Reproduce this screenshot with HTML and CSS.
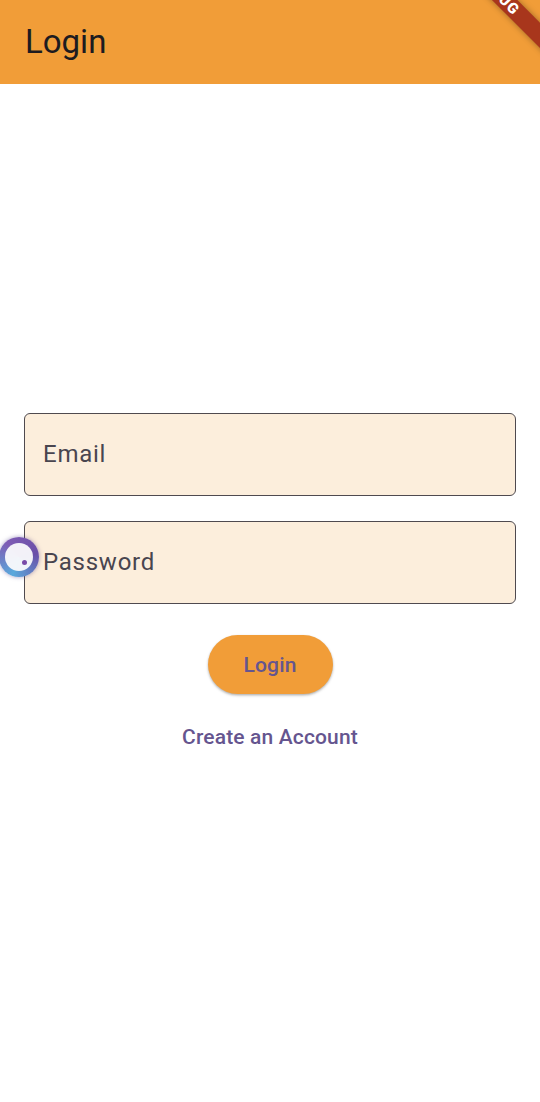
FILE: index.html
```html
<!DOCTYPE html>
<html>
<head>
<meta charset="utf-8">
<link rel="stylesheet" href="styles.css">
</head>
<body>
<div class="app">
  <header class="appbar">
    <h1 class="title">Login</h1>
  </header>
  <main class="content">
    <div class="field"><span class="label">Email</span></div>
    <div class="field"><span class="label">Password</span></div>
    <div class="actions">
      <button class="btn-login">Login</button>
      <button class="btn-text">Create an Account</button>
    </div>
  </main>
  <div class="banner"><span>DEBUG</span></div>
  <div class="touch"><span class="dot"></span></div>
</div>
</body>
</html>
```
FILE: styles.css
```css
* { box-sizing: border-box; }
html, body { margin: 0; padding: 0; }
body {
  font-family: Roboto, "Noto Sans", sans-serif;
  background: #ffffff;
  width: 540px;
  height: 1102px;
  overflow: hidden;
}
.app {
  position: relative;
  width: 540px;
  height: 1102px;
  overflow: hidden;
  display: flex;
  flex-direction: column;
}
.appbar {
  height: 84px;
  background: #f19d38;
  display: flex;
  align-items: center;
  padding: 0 25px 2px;
  flex-shrink: 0;
}
.title {
  margin: 0;
  font-size: 33px;
  font-weight: 400;
  color: #1d1b20;
}
.content {
  padding: 329px 24px 0;
  display: flex;
  flex-direction: column;
  gap: 25px;
}
.field {
  height: 83px;
  border: 1.5px solid #4f4a4f;
  border-radius: 6px;
  background: #fceedc;
  display: flex;
  align-items: center;
  padding: 0 18px 2px;
}
.label {
  font-size: 24px;
  letter-spacing: 0.75px;
  color: #49454f;
}
.actions {
  display: flex;
  flex-direction: column;
  align-items: center;
  gap: 13px;
  margin-top: 6px;
}
.btn-login {
  width: 125px;
  height: 59px;
  border: none;
  border-radius: 30px;
  background: #f19d38;
  color: #65558f;
  font-family: Roboto, sans-serif;
  font-size: 21px;
  font-weight: 500;
  letter-spacing: 0.15px;
  box-shadow: 0 1.5px 3px rgba(0,0,0,0.22), 0 1px 2px rgba(0,0,0,0.12);
  padding: 0;
}
.btn-text {
  height: 60px;
  border: none;
  background: transparent;
  color: #65558f;
  font-family: Roboto, sans-serif;
  font-size: 21px;
  font-weight: 500;
  letter-spacing: 0.15px;
  padding: 0 12px;
}
.banner {
  position: absolute;
  top: 0;
  right: 0;
  width: 200px;
  height: 18px;
  background: #a8361c;
  box-shadow: 0 0 6px rgba(0,0,0,0.35);
  transform-origin: center;
  transform: translate(50%, -50%) rotate(45deg) translate(0, 25px);
  display: flex;
  align-items: center;
  justify-content: center;
}
.banner span {
  color: #fff;
  font-size: 15px;
  font-weight: 900;
  letter-spacing: 1px;
  line-height: 1;
  transform: translateX(-34px);
}
.touch {
  position: absolute;
  left: 0;
  top: 537px;
  width: 40px;
  height: 40px;
  margin-left: -1px;
  border-radius: 50%;
  background: conic-gradient(from 200deg, #5aa9dc, #7e5bb4, #6a4fa8, #5aa9dc);
  box-shadow: 0 0 4px rgba(80,60,140,0.5);
}
.touch::before {
  content: "";
  position: absolute;
  inset: 6px;
  border-radius: 50%;
  background: rgba(250,250,252,0.95);
}
.dot {
  position: absolute;
  left: 23px;
  top: 23px;
  width: 5px;
  height: 5px;
  border-radius: 50%;
  background: #7a4ba8;
  z-index: 1;
}
```
